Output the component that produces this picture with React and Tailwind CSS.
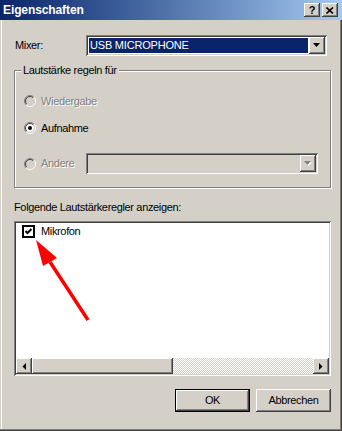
const RAISED = 'shadow-[inset_-1px_-1px_#404040,inset_1px_1px_#fff,inset_-2px_-2px_#808080,inset_2px_2px_#d4d0c8]'
const SUNKEN = 'shadow-[inset_1px_1px_#808080,inset_-1px_-1px_#fff,inset_2px_2px_#404040,inset_-2px_-2px_#d4d0c8]'

function Radio({ checked, disabled }) {
  return (
    <svg width="12" height="12" viewBox="0 0 12 12" className="shrink-0">
      <circle cx="6" cy="6" r="4" fill={disabled ? '#d4d0c8' : '#fff'} />
      <path d="M2.1 9.9A5.5 5.5 0 0 1 9.9 2.1" fill="none" stroke="#808080" />
      <path d="M9.9 2.1A5.5 5.5 0 0 1 2.1 9.9" fill="none" stroke="#fff" />
      <path d="M2.8 9.2A4.5 4.5 0 0 1 9.2 2.8" fill="none" stroke="#404040" />
      <path d="M9.2 2.8A4.5 4.5 0 0 1 2.8 9.2" fill="none" stroke="#d4d0c8" />
      {checked && <circle cx="6" cy="6" r="2" fill="#000" />}
    </svg>
  )
}

function DownArrow({ disabled }) {
  return (
    <svg width="8" height="5" viewBox="0 0 8 5">
      {disabled && <polygon points="1,1 8,1 4.5,5" fill="#fff" />}
      <polygon points="0,0 7,0 3.5,4" fill={disabled ? '#808080' : '#000'} />
    </svg>
  )
}

function DropButton({ disabled }) {
  return (
    <div className={`w-[16px] self-stretch bg-[#d4d0c8] flex items-center justify-center ${RAISED}`}>
      <DownArrow disabled={disabled} />
    </div>
  )
}

export default function App() {
  return (
    <div className="w-[342px] h-[431px] bg-[#d4d0c8] font-['Liberation_Sans',Arial,sans-serif] text-[11px] tracking-[-0.35px] text-black select-none">
      {/* title bar */}
      <div className="h-[20px] flex items-center pl-[3px] pr-[4px] bg-linear-to-r from-[#0a246a] to-[#a6caf0]">
        <span className="text-white font-bold text-[12px] tracking-[-0.1px] flex-1">Eigenschaften</span>
        <div className={`w-[16px] h-[14px] bg-[#d4d0c8] flex items-center justify-center text-[11px] font-bold leading-none ${RAISED}`}>?</div>
        <div className={`ml-[2px] w-[16px] h-[14px] bg-[#d4d0c8] flex items-center justify-center ${RAISED}`}>
          <svg width="8" height="7" viewBox="0 0 8 7">
            <path d="M0.5 0.5L7 6.5M7 0.5L0.5 6.5" stroke="#000" strokeWidth="1.6" />
          </svg>
        </div>
      </div>

      {/* body */}
      <div className="h-[411px] pl-[14px] pr-[11px] shadow-[inset_-1px_-1px_#404040,inset_-2px_-2px_#808080,inset_1px_0_#d4d0c8,inset_2px_0_#fff]">
        {/* mixer */}
        <div className="pt-[15px] flex items-center h-[36px]">
          <span className="w-[72px] pl-px">Mixer:</span>
          <div className={`w-[241px] h-[21px] bg-white p-[2px] flex ${SUNKEN}`}>
            <div className="flex-1 m-px bg-[#0a246a] text-white flex items-center px-[1px] tracking-[-0.2px]">USB MICROPHONE</div>
            <DropButton />
          </div>
        </div>

        {/* group */}
        <div className="relative mt-[14px] h-[118px] border border-[#808080] shadow-[inset_1px_1px_#fff,1px_1px_#fff] pl-[9px] pt-[20px]">
          <span className="absolute -top-[8px] left-[6px] bg-[#d4d0c8] px-[2px] leading-[14px]">Lautstärke regeln für</span>
          <div className="h-[20px] flex items-center">
            <Radio disabled />
            <span className="ml-[5px] text-[#808080] [text-shadow:1px_1px_0_#fff]">Wiedergabe</span>
          </div>
          <div className="mt-[7px] h-[20px] flex items-center">
            <Radio checked />
            <span className="ml-[5px]">Aufnahme</span>
          </div>
          <div className="mt-[15px] h-[21px] flex items-center">
            <Radio disabled />
            <span className="ml-[5px] w-[45px] text-[#808080] [text-shadow:1px_1px_0_#fff]">Andere</span>
            <div className={`w-[232px] h-[21px] bg-[#d4d0c8] p-[2px] flex justify-end ${SUNKEN}`}>
              <DropButton disabled />
            </div>
          </div>
        </div>

        <div className="mt-[12px] h-[14px] leading-[14px]">Folgende Lautstärkeregler anzeigen:</div>

        {/* list */}
        <div className={`relative mt-[7px] h-[155px] p-[2px] bg-white flex flex-col ${SUNKEN}`}>
          <div className="flex-1 pl-[6px] pt-[2px]">
            <div className="flex items-center h-[13px]">
              <div className="w-[13px] h-[13px] border-2 border-black bg-white flex items-center justify-center">
                <svg width="9" height="9" viewBox="0 0 9 9">
                  <polyline points="1.5,4 3.5,6 7.5,2" fill="none" stroke="#000" strokeWidth="2" />
                </svg>
              </div>
              <span className="ml-[6px]">Mikrofon</span>
            </div>
          </div>
          <div className="h-[16px] flex">
            <div className={`w-[16px] bg-[#d4d0c8] flex items-center justify-center ${RAISED}`}>
              <svg width="4" height="7" viewBox="0 0 4 7"><polygon points="4,0 4,7 0.5,3.5" fill="#000" /></svg>
            </div>
            <div className={`w-[141px] bg-[#d4d0c8] ${RAISED}`} />
            <div className="flex-1 bg-[repeating-conic-gradient(#fff_0_25%,#d4d0c8_0_50%)] bg-[length:2px_2px]" />
            <div className={`w-[16px] bg-[#d4d0c8] flex items-center justify-center ${RAISED}`}>
              <svg width="4" height="7" viewBox="0 0 4 7"><polygon points="0,0 0,7 3.5,3.5" fill="#000" /></svg>
            </div>
          </div>
          {/* red annotation arrow */}
          <svg className="absolute left-0 top-0" width="100" height="110" viewBox="0 0 100 110">
            <line x1="36" y1="41" x2="74" y2="99" stroke="#f00" strokeWidth="3.5" />
            <polygon points="22,19 29,45 43,37" fill="#f00" />
          </svg>
        </div>

        {/* buttons */}
        <div className="mt-[13px] flex justify-end gap-[6px]">
          <div className={`w-[75px] h-[23px] border border-black bg-[#d4d0c8] flex items-center justify-center ${RAISED}`}>OK</div>
          <div className={`w-[75px] h-[23px] bg-[#d4d0c8] flex items-center justify-center ${RAISED}`}>Abbrechen</div>
        </div>
      </div>
    </div>
  )
}
